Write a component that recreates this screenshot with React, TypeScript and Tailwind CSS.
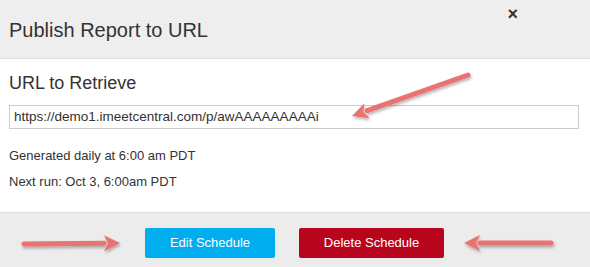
import React from 'react';

function Arrow({ x1, y1, x2, y2 }: { x1: number; y1: number; x2: number; y2: number }) {
  const ang = Math.atan2(y2 - y1, x2 - x1);
  const len = 16;
  const w = 8;
  const bx = x2 - Math.cos(ang) * len;
  const by = y2 - Math.sin(ang) * len;
  const px = -Math.sin(ang) * w;
  const py = Math.cos(ang) * w;
  return (
    <g filter="url(#sh)">
      <line x1={x1} y1={y1} x2={bx} y2={by} stroke="#ea7271" strokeWidth={5} strokeLinecap="round" />
      <polygon points={`${x2},${y2} ${bx + px},${by + py} ${bx + Math.cos(ang) * 4},${by + Math.sin(ang) * 4} ${bx - px},${by - py}`} fill="#ea7271" />
    </g>
  );
}

export default function App() {
  return (
    <div className="relative w-[590px] h-[267px] bg-white font-['Liberation_Sans',Arial,sans-serif] text-[#333]">
      <div className="h-[59px] bg-[#eeeeee] border-b border-[#dddddd] flex items-center px-[9px] relative">
        <h1 className="text-[20px] text-[#333] pt-[1px]">Publish Report to URL</h1>
        <button className="absolute right-[72px] top-[5px] text-[18px] leading-none text-[#333] font-bold">×</button>
      </div>
      <div className="h-[153px] px-[9px] pt-[13px]">
        <h2 className="text-[18px] leading-[22px]">URL to Retrieve</h2>
        <div className="mt-[11px] w-[570px] h-[24px] border border-[#cccccc] flex items-center px-[4px] text-[13.5px]">
          https://demo1.imeetcentral.com/p/awAAAAAAAAAi
        </div>
        <p className="mt-[19px] text-[13px] leading-[16px]">Generated daily at 6:00 am PDT</p>
        <p className="mt-[10px] text-[13px] leading-[16px]">Next run: Oct 3, 6:00am PDT</p>
      </div>
      <div className="h-[55px] bg-[#ececec] border-t border-[#dddddd] flex items-start pt-[15px] pl-[145px] gap-[24px]">
        <button className="w-[130px] h-[30px] bg-[#00aeef] text-white text-[13px] rounded-[2px]">Edit Schedule</button>
        <button className="w-[145px] h-[30px] bg-[#b8051d] text-white text-[13px] rounded-[2px]">Delete Schedule</button>
      </div>
      <svg className="absolute inset-0 pointer-events-none" width={590} height={267}>
        <defs>
          <filter id="sh" x="-20%" y="-50%" width="140%" height="200%">
            <feDropShadow dx="1" dy="2" stdDeviation="1.5" floodColor="#000" floodOpacity="0.3" />
          </filter>
        </defs>
        <Arrow x1={468} y1={75} x2={352} y2={116} />
        <Arrow x1={24} y1={244} x2={120} y2={243} />
        <Arrow x1={551} y1={243} x2={464} y2={243} />
      </svg>
    </div>
  );
}
